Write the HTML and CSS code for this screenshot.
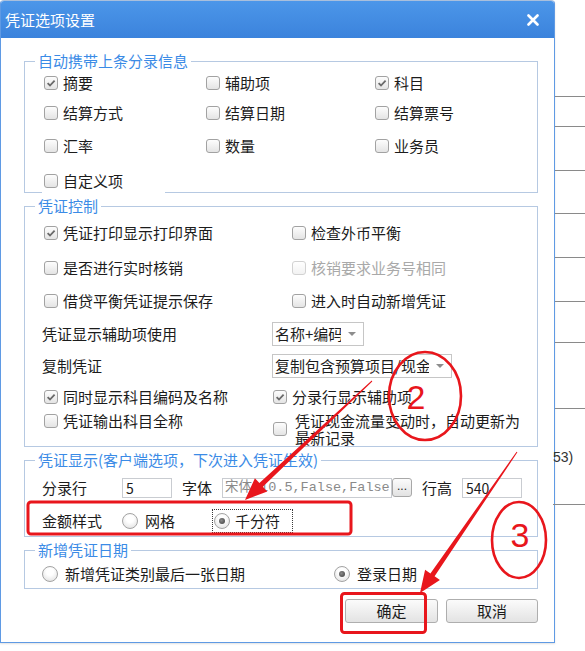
FILE: index.html
```html
<!DOCTYPE html>
<html lang="zh-CN">
<head>
<meta charset="utf-8">
<title>凭证选项设置</title>
<link rel="stylesheet" href="styles.css">
</head>
<body>
<div class="screen">
  <div class="dialog">
    <div class="titlebar">
      <span class="title">凭证选项设置</span>
      <svg class="close" width="12" height="12" viewBox="0 0 12 12"><path d="M1.5 1.5L10.5 10.5M10.5 1.5L1.5 10.5" stroke="#fff" stroke-width="2.6" stroke-linecap="round"/></svg>
    </div>
    <div class="content">
      <fieldset class="gb">
        <legend>自动携带上条分录信息</legend>
        <div class="gb-body grid3">
          <span class="opt"><span class="box"><svg width="12" height="12" viewBox="0 0 12 12"><path d="M2.6 6.2L5 8.5L9.6 3.6" fill="none" stroke="#6a6a6a" stroke-width="1.8"/></svg></span>摘要</span>
          <span class="opt"><span class="box"></span>辅助项</span>
          <span class="opt"><span class="box"><svg width="12" height="12" viewBox="0 0 12 12"><path d="M2.6 6.2L5 8.5L9.6 3.6" fill="none" stroke="#6a6a6a" stroke-width="1.8"/></svg></span>科目</span>
          <span class="opt"><span class="box"></span>结算方式</span>
          <span class="opt"><span class="box"></span>结算日期</span>
          <span class="opt"><span class="box"></span>结算票号</span>
          <span class="opt"><span class="box"></span>汇率</span>
          <span class="opt"><span class="box"></span>数量</span>
          <span class="opt"><span class="box"></span>业务员</span>
          <span class="opt last"><span class="box"></span>自定义项</span>
        </div>
      </fieldset>

      <fieldset class="gb">
        <legend>凭证控制</legend>
        <div class="gb-body grid2">
          <span class="opt"><span class="box"><svg width="12" height="12" viewBox="0 0 12 12"><path d="M2.6 6.2L5 8.5L9.6 3.6" fill="none" stroke="#6a6a6a" stroke-width="1.8"/></svg></span>凭证打印显示打印界面</span>
          <span class="opt at3"><span class="box"></span>检查外币平衡</span>
          <span class="opt"><span class="box"></span>是否进行实时核销</span>
          <span class="opt at3 disabled"><span class="box"></span>核销要求业务号相同</span>
          <span class="opt"><span class="box"></span>借贷平衡凭证提示保存</span>
          <span class="opt at3"><span class="box"></span>进入时自动新增凭证</span>
          <span class="txt">凭证显示辅助项使用</span>
          <span class="select w92 at2"><span class="sel-text">名称+编码</span><span class="sel-arrow"></span></span>
          <span class="txt">复制凭证</span>
          <span class="select w180 at2"><span class="sel-text">复制包含预算项目/现金</span><span class="sel-arrow"></span></span>
          <span class="opt"><span class="box"><svg width="12" height="12" viewBox="0 0 12 12"><path d="M2.6 6.2L5 8.5L9.6 3.6" fill="none" stroke="#6a6a6a" stroke-width="1.8"/></svg></span>同时显示科目编码及名称</span>
          <span class="opt at2"><span class="box"><svg width="12" height="12" viewBox="0 0 12 12"><path d="M2.6 6.2L5 8.5L9.6 3.6" fill="none" stroke="#6a6a6a" stroke-width="1.8"/></svg></span>分录行显示辅助项</span>
          <span class="opt top"><span class="box"></span>凭证输出科目全称</span>
          <span class="opt top at2"><span class="box"></span><span class="two">凭证现金流量变动时，自动更新为<br>最新记录</span></span>
        </div>
      </fieldset>

      <fieldset class="gb">
        <legend>凭证显示(客户端选项，下次进入凭证生效)</legend>
        <div class="gb-body">
          <div class="frow r37">
            <span class="lbl w80">分录行</span>
            <span class="field w50">5</span>
            <span class="lbl w40 ml10">字体</span>
            <span class="field w170 mono">宋体,10.5,False,False</span>
            <span class="dots">...</span>
            <span class="lbl w40 ml10">行高</span>
            <span class="field w60">540</span>
          </div>
          <div class="frow r30">
            <span class="lbl w80">金额样式</span>
            <span class="opt r-opt"><span class="radio"></span>网格</span>
            <span class="focus"><span class="opt r-opt2"><span class="radio on"></span>千分符</span></span>
          </div>
        </div>
      </fieldset>

      <fieldset class="gb">
        <legend>新增凭证日期</legend>
        <div class="gb-body">
          <div class="frow r29">
            <span class="opt r-opt3 w292"><span class="radio"></span>新增凭证类别最后一张日期</span>
            <span class="opt r-opt3"><span class="radio on"></span>登录日期</span>
          </div>
        </div>
      </fieldset>

      <div class="buttons">
        <span class="btn w93">确定</span>
        <span class="btn w92b">取消</span>
      </div>
    </div>
  </div>

  <div class="bg">
    <div class="seg"></div>
    <div class="seg"></div>
    <div class="seg"></div>
    <div class="seg"></div>
    <div class="seg"></div>
    <div class="seg"></div>
    <div class="seg"></div>
    <div class="seg"></div>
    <div class="seg note">53)</div>
    <div class="rest"></div>
  </div>

  <svg class="marks" width="585" height="651" viewBox="0 0 585 651">
    <rect x="28" y="502" width="323" height="32" rx="3" fill="none" stroke="#e8161c" stroke-width="3"/>
    <rect x="341.5" y="593.5" width="84" height="39" rx="3" fill="none" stroke="#e8161c" stroke-width="3"/>
    <ellipse cx="425" cy="396" rx="36" ry="44" fill="none" stroke="#e8161c" stroke-width="2.6"/>
    <ellipse cx="519" cy="540" rx="27" ry="38" fill="none" stroke="#e8161c" stroke-width="2.6"/>
    <text x="416" y="409" class="num">2</text>
    <text x="520" y="547" class="num">3</text>
    <polygon points="372.3,381.4 262.8,486.7 267.3,491.5 245,500 254.9,478.3 259.4,483.1 371.7,380.6" fill="#e8161c"/>
    <polygon points="517.4,452.3 434.6,576.3 439.9,580 420,593 425.1,569.8 430.4,573.5 516.6,451.7" fill="#e8161c"/>
  </svg>
</div>
</body>
</html>
```

FILE: styles.css
```css
* { box-sizing: border-box; }
html, body { margin: 0; padding: 0; background: #fff; }
body {
  font-family: "Noto Sans CJK SC", "Noto Sans", sans-serif;
  font-size: 15px;
  color: #1c1c1c;
  overflow: hidden;
}
.screen { position: relative; display: flex; width: 585px; height: 651px; }

.dialog {
  width: 555px; height: 643px; flex: none;
  border: 1px solid #5f9ae4; border-top-color: #a9bfdc;
  border-radius: 4px 4px 0 0;
  background: #fff;
  display: flex; flex-direction: column;
  box-shadow: 0 1px 2px rgba(0,0,0,.12);
}
.titlebar {
  height: 37px; flex: none;
  background: linear-gradient(#4c96e9, #3b83dc);
  display: flex; align-items: center; justify-content: space-between;
  padding: 0 15px 0 4px;
  color: #fff; border-radius: 3px 3px 0 0;
}
.title { font-size: 15px; line-height: 18px; }
.content { padding: 14px 16px 19px 23px; flex: 1; }

fieldset.gb { margin: 0; padding: 0; border: 1px solid #b6c9e2; min-width: 0; }
.gb + .gb { margin-top: 4px; }
legend { margin-left: 10px; padding: 0 3px; color: #3b8be6; line-height: 18px; font-size: 15px; }
.gb-body { padding-left: 19px; }

.grid3 {
  display: grid;
  grid-template-columns: 162px 169px 1fr;
  grid-template-rows: 26px 34px 32px 30px;
  align-items: center;
}
.grid2 {
  display: grid;
  grid-template-columns: 229px 19px 1fr;
  grid-template-rows: 36px 34px 31px 35px 30px 31px 34px;
  align-items: center;
}
.at3 { grid-column: 3; }
.at2 { grid-column: 2 / 4; }

.opt { display: flex; align-items: center; gap: 5px; line-height: 18px; white-space: nowrap; }
.opt.top { align-self: start; line-height: 17px; }
.two { line-height: 17px; margin-left: 3px; }
.last {
  align-self: end; height: 24px; margin-bottom: -1px; margin-left: -2px; padding-left: 2px;
  width: 123px; background: #fff;
}
.box {
  width: 14px; height: 14px; flex: none;
  border: 1px solid #a2a2a2; border-radius: 3px;
  background: linear-gradient(#fdfdfd, #e4e4e4);
  display: flex; align-items: center; justify-content: center;
}
.disabled { color: #a9a9a9; }
.disabled .box { border-color: #d2d2d2; background: linear-gradient(#fff, #f2f2f2); }
.txt { margin-left: -2px; line-height: 18px; white-space: nowrap; }

.select {
  display: flex; align-items: center; height: 24px; margin-left: -1px;
  border: 1px solid #c6c6c6; background: #fff; padding-left: 2px; white-space: nowrap;
}
.w92 { width: 92px; }
.w180 { width: 180px; }
.sel-text { flex: 1; overflow: hidden; line-height: 18px; }
.sel-arrow { width: 22px; flex: none; display: flex; justify-content: center; }
.sel-arrow::before {
  content: ""; width: 0; height: 0;
  border-left: 4px solid transparent; border-right: 4px solid transparent; border-top: 4px solid #8d8d8d;
}

.frow { display: flex; align-items: center; margin-left: -2px; }
.r37 { height: 37px; }
.r30 { height: 30px; }
.r29 { height: 29px; }
.lbl { line-height: 18px; white-space: nowrap; flex: none; }
.w80 { width: 80px; }
.w40 { width: 40px; }
.ml10 { margin-left: 10px; }
.field {
  height: 20px; flex: none; border: 1px solid #c9ccd1; background: #fff;
  padding-left: 3px; font-size: 14px; line-height: 18px; overflow: hidden; white-space: nowrap;
}
.w50 { width: 50px; }
.w60 { width: 60px; }
.w170 { width: 170px; }
.mono { font-family: "Liberation Mono", "Noto Sans CJK SC", monospace; font-size: 13.5px; color: #8a8a8a; padding-left: 2px; }
.dots {
  width: 20px; height: 19px; flex: none; border: 1px solid #a8a8a8; border-radius: 3px;
  background: linear-gradient(#fcfcfc, #e2e2e2);
  font-size: 12px; line-height: 14px; text-align: center; font-family: "Liberation Sans", sans-serif;
}

.radio {
  width: 16px; height: 16px; flex: none; border-radius: 50%;
  border: 1px solid #a3a3a3;
  background: radial-gradient(circle at 50% 35%, #ffffff 30%, #dcdcdc 100%);
  display: flex; align-items: center; justify-content: center;
}
.radio.on::after {
  content: ""; width: 6px; height: 6px; border-radius: 50%;
  background: radial-gradient(circle at 40% 40%, #8a8a8a, #3c3c3c);
}
.r-opt { gap: 7px; }
.r-opt2 { gap: 5px; }
.r-opt3 { gap: 7px; }
.w292 { width: 292px; flex: none; }
.focus {
  margin-left: 37px; height: 24px; border: 1px dotted #3a3a3a;
  padding: 0 12px 0 1px; display: flex; align-items: center;
}

.buttons { display: flex; justify-content: flex-end; gap: 8px; margin-top: 10px; }
.btn {
  height: 24px; border: 1px solid #aeaeae; border-radius: 3px;
  background: linear-gradient(#fbfbfb, #e3e3e3);
  display: flex; align-items: center; justify-content: center; line-height: 18px;
}
.w93 { width: 93px; }
.w92b { width: 92px; }

.bg {
  flex: 1; display: grid;
  grid-template-rows: 97px 30px 44px 43px 44px 44px 41px 66px 96px 1fr;
}
.seg { border-bottom: 1px solid #8a8a8a; }
.note {
  display: flex; align-items: center; margin-left: -2px;
  font-family: "Liberation Sans", sans-serif; font-size: 14px; color: #333;
}

.marks { position: absolute; left: 0; top: 0; pointer-events: none; }
.num { font-family: "Liberation Sans", sans-serif; font-size: 34px; fill: #e8161c; text-anchor: middle; }
```
